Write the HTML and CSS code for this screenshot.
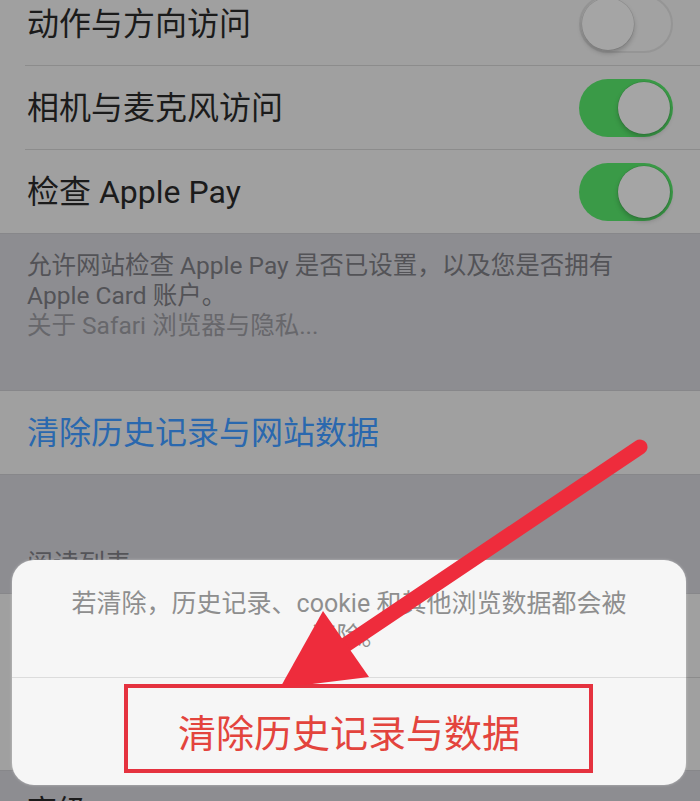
FILE: index.html
```html
<!DOCTYPE html>
<html lang="zh-CN">
<head>
<meta charset="utf-8">
<title>Safari 设置</title>
<link rel="stylesheet" href="styles.css">
</head>
<body>
<div class="screen">
  <div class="group first">
    <div class="row"><span class="label">动作与方向访问</span><span class="switch off"><span class="knob"></span></span></div>
    <div class="row"><span class="label">相机与麦克风访问</span><span class="switch on"><span class="knob"></span></span></div>
    <div class="row"><span class="label">检查 Apple Pay</span><span class="switch on"><span class="knob"></span></span></div>
  </div>
  <div class="footer">
    <p>允许网站检查 Apple Pay 是否已设置，以及您是否拥有</p>
    <p>Apple Card 账户。</p>
    <p class="about">关于 Safari 浏览器与隐私...</p>
  </div>
  <div class="group bordered">
    <div class="row"><span class="label link">清除历史记录与网站数据</span></div>
  </div>
  <div class="header">阅读列表</div>
  <div class="group bordered">
    <div class="row"><span class="label">自动离线存储</span></div>
    <div class="row tall"></div>
  </div>
  <div class="bottom-row">高级</div>

  <div class="sheet">
    <div class="message">若清除，历史记录、cookie 和其他浏览数据都会被<br>清除。</div>
    <div class="action">清除历史记录与数据</div>
  </div>

  <div class="mark-box"></div>
  <svg class="arrow" width="700" height="801" viewBox="0 0 700 801">
    <line x1="640" y1="447" x2="335" y2="652" stroke="#ee2c3c" stroke-width="15" stroke-linecap="round"/>
    <polygon points="280,688 323,611 369,677" fill="#ee2c3c"/>
  </svg>
</div>
</body>
</html>
```
FILE: styles.css
```css
* { box-sizing: border-box; }
html, body { margin: 0; padding: 0; }
body {
  width: 700px;
  height: 801px;
  overflow: hidden;
  background: #8d8d91;
  font-family: Roboto, "Noto Sans CJK SC", sans-serif;
}
.screen {
  position: relative;
  width: 700px;
  height: 801px;
  overflow: hidden;
  background: #8d8d91;
}
.group {
  background: #a0a0a0;
}
.group.first {
  margin-top: -18px;
  border-bottom: 1px solid #87878a;
}
.group.bordered {
  border-top: 1px solid #87878a;
  border-bottom: 1px solid #87878a;
}
.row {
  margin-left: 25px;
  padding-left: 2px;
  padding-right: 27px;
  height: 84px;
  display: flex;
  align-items: center;
  justify-content: space-between;
  border-bottom: 1px solid #8c8c8c;
}
.row:last-child { border-bottom: none; height: 83px; }
.row.tall { height: 92px; }
.label {
  font-size: 32px;
  color: #1b1b1b;
  line-height: 40px;
}
.label.link { color: #2a68ae; }
.switch {
  width: 94px;
  height: 58px;
  border-radius: 29px;
  display: flex;
  align-items: center;
  padding: 0 3px;
}
.switch.on {
  background: #3a9a47;
  justify-content: flex-end;
}
.switch.off {
  background: #a2a2a2;
  border: 2px solid #959595;
  justify-content: flex-start;
  padding: 0 1px;
}
.knob {
  width: 52px;
  height: 52px;
  border-radius: 50%;
  background: #a5a5a5;
  box-shadow: 0 3px 5px rgba(0,0,0,0.22), 0 0 0 0.5px rgba(0,0,0,0.12);
}
.footer {
  height: 156px;
  padding: 17px 27px 0;
}
.footer p {
  margin: 0;
  font-size: 24.5px;
  line-height: 30px;
  color: #535357;
  white-space: nowrap;
}
.footer p.about { color: #67676b; }
.header {
  height: 118px;
  padding: 74px 27px 0;
  font-size: 26px;
  line-height: 30px;
  color: #545458;
}
.bottom-row {
  padding: 20px 27px 0;
  font-size: 30px;
  line-height: 40px;
  color: #1b1b1b;
}
.sheet {
  position: absolute;
  left: 12px;
  top: 560px;
  width: 674px;
  height: 225px;
  border-radius: 22px;
  background: #f6f6f6;
  display: flex;
  flex-direction: column;
  overflow: hidden;
  box-shadow: 0 0 3px rgba(255,255,255,0.4);
}
.message {
  height: 118px;
  padding-top: 27px;
  text-align: center;
  font-size: 25px;
  line-height: 33px;
  color: #8e8e8e;
  white-space: nowrap;
  border-bottom: 1px solid #dcdcdc;
}
.action {
  flex: 1;
  display: flex;
  align-items: center;
  justify-content: center;
  font-size: 38px;
  color: #e3443d;
  padding-bottom: 2px;
}
.mark-box {
  position: absolute;
  left: 124px;
  top: 684px;
  width: 469px;
  height: 89px;
  border: 4px solid #e5323f;
}
.arrow {
  position: absolute;
  left: 0;
  top: 0;
  pointer-events: none;
}
```
